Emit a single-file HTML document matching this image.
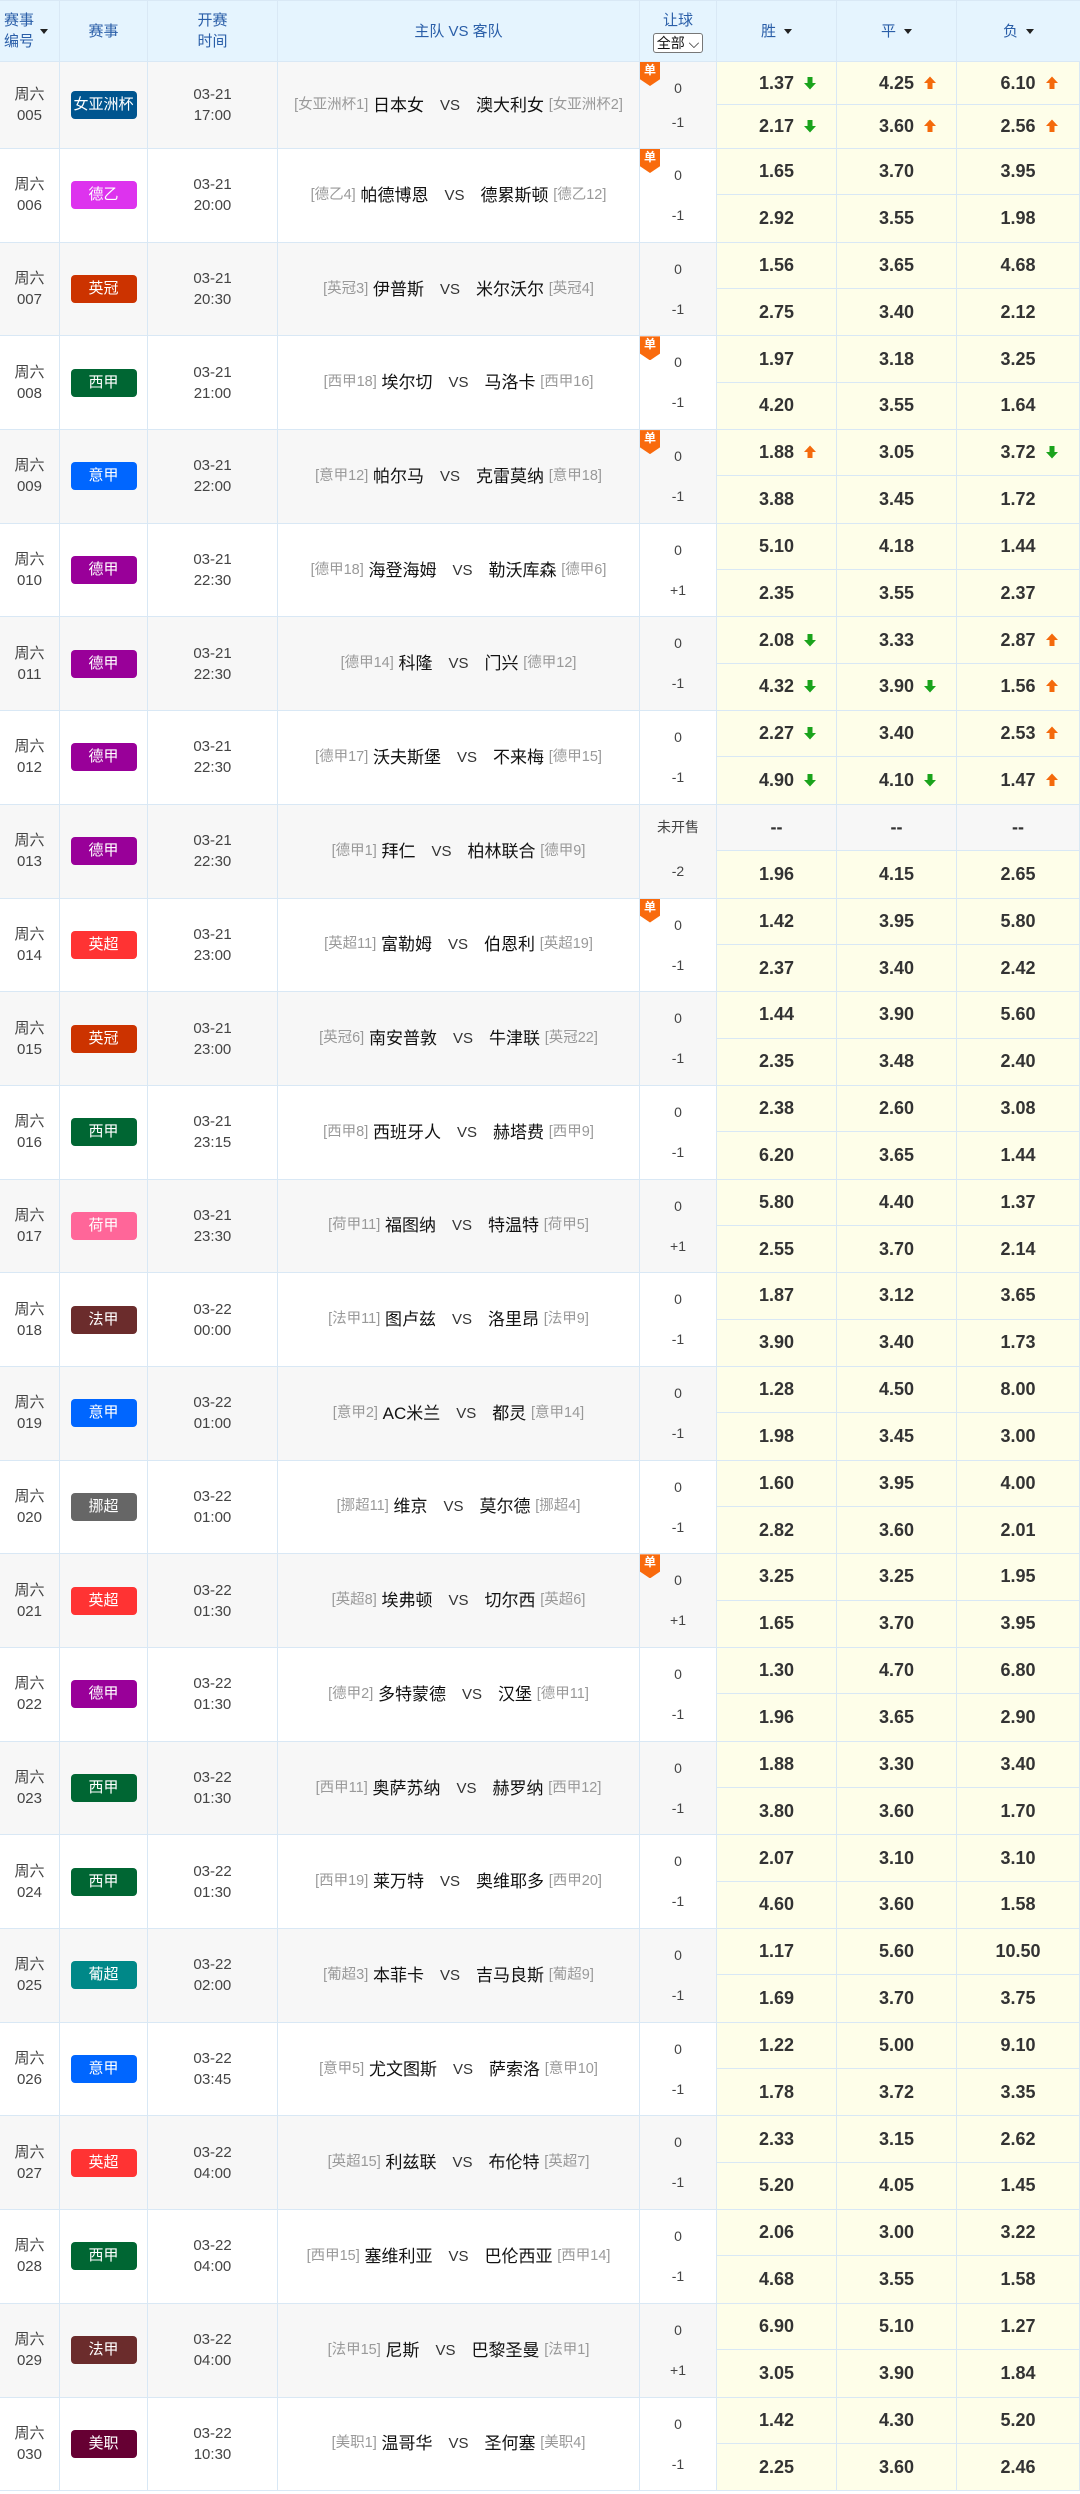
<!DOCTYPE html>
<html><head><meta charset="utf-8">
<style>
*{box-sizing:border-box;margin:0;padding:0}
body{width:1080px;height:2494px;background:#fff;font-family:"Liberation Sans","Noto Sans CJK SC",sans-serif;color:#333;overflow:hidden}
.hd,.m{display:grid;grid-template-columns:60px 88px 130px 362px 77px 120px 120px 123px;border-bottom:1px solid #d9e8f5}
.hd{height:62px;background:#e5f4fe;color:#2a5ea8;font-size:15px;border-top:1px solid #d9e8f5}
.hd>div{border-right:1px solid #d9e8f5;display:flex;align-items:center;justify-content:center;text-align:center;line-height:21px;position:relative}
.tri{display:inline-block;width:0;height:0;border-left:4px solid transparent;border-right:4px solid transparent;border-top:5px solid #222;margin-left:8px;vertical-align:middle}
.sel{display:inline-block;border:1px solid #777;border-radius:3px;color:#111;font-size:14px;line-height:18px;padding:0 3px;margin-top:2px;background:#fff}
.m{grid-template-rows:1fr 1fr;height:93.7px}
.m.f{height:87px}
.m>div{border-right:1px solid #d9e8f5}
.c{grid-row:1/3;display:flex;align-items:center;justify-content:center;text-align:center;font-size:15px;line-height:21px;color:#444}
.g .c{background:#f7f7f7}
.b{display:inline-block;width:66px;height:28px;line-height:28px;border-radius:4px;color:#fff;font-size:15px}
.t{font-size:17px;color:#111;white-space:nowrap}
.t i{font-style:normal;font-size:14.5px;color:#999}
.t s{text-decoration:none;font-size:15px;color:#333;margin:0 16px}
.h{grid-row:1/3;position:relative;text-align:center;font-size:14px;color:#444}
.g .h{background:#f7f7f7}
.h p{position:absolute;left:0;right:0}
.h p.a{top:18px}.h p.z{top:58px}
.dan{position:absolute;left:0;top:0;width:20px;height:24px;background:#f96a0d;color:#fff;font-size:12px;line-height:17px;text-align:center;clip-path:polygon(0 0,100% 0,100% 72%,50% 100%,0 72%)}
.o{background:#fefee9;display:flex;align-items:center;justify-content:center;font-weight:bold;font-size:18px;color:#333}
.o.t1{border-bottom:1px solid #d9e8f5}
.o span{position:relative}
.o svg{position:absolute;left:100%;top:3px;margin-left:9px}
.o.ns{background:#f7f7f7}
</style></head><body>
<svg width="0" height="0" style="position:absolute"><defs>
<symbol id="dn" viewBox="0 0 14 14"><path d="M4.5 1h5v6h3.5L7 13.5 1 7h3.5z"/></symbol>
<symbol id="up" viewBox="0 0 14 14"><path d="M4.5 13h5V7h3.5L7 .5 1 7h3.5z"/></symbol>
</defs></svg>
<div class="hd">
<div style="justify-content:flex-start;padding-left:4px;text-align:left">赛事<br>编号<span class="tri" style="margin-left:6px"></span></div>
<div>赛事</div><div>开赛<br>时间</div><div>主队 VS 客队</div>
<div style="flex-direction:column">让球<span class="sel">全部 ⌵</span></div>
<div>胜<span class="tri"></span></div><div>平<span class="tri"></span></div><div style="border-right:0">负<span class="tri"></span></div>
</div>

<div class="m g f"><div class="c">周六<br>005</div><div class="c"><span class="b" style="background:#00558f">女亚洲杯</span></div><div class="c">03-21<br>17:00</div><div class="c t"><i>[女亚洲杯1]</i>&nbsp;日本女<s>VS</s>澳大利女&nbsp;<i>[女亚洲杯2]</i></div><div class="h"><b class="dan">单</b><p class="a">0</p><p class="z" style="top:52px">-1</p></div>
<div class="o t1"><span>1.37<svg width="14" height="14" fill="#1aa31c"><use href="#dn"/></svg></span></div><div class="o t1"><span>4.25<svg width="14" height="14" fill="#f46a0c"><use href="#up"/></svg></span></div><div class="o t1"><span>6.10<svg width="14" height="14" fill="#f46a0c"><use href="#up"/></svg></span></div>
<div class="o"><span>2.17<svg width="14" height="14" fill="#1aa31c"><use href="#dn"/></svg></span></div><div class="o"><span>3.60<svg width="14" height="14" fill="#f46a0c"><use href="#up"/></svg></span></div><div class="o"><span>2.56<svg width="14" height="14" fill="#f46a0c"><use href="#up"/></svg></span></div></div>

<div class="m"><div class="c">周六<br>006</div><div class="c"><span class="b" style="background:#dd33ee">德乙</span></div><div class="c">03-21<br>20:00</div><div class="c t"><i>[德乙4]</i>&nbsp;帕德博恩<s>VS</s>德累斯顿&nbsp;<i>[德乙12]</i></div><div class="h"><b class="dan">单</b><p class="a">0</p><p class="z">-1</p></div>
<div class="o t1">1.65</div><div class="o t1">3.70</div><div class="o t1">3.95</div><div class="o">2.92</div><div class="o">3.55</div><div class="o">1.98</div></div>

<div class="m g"><div class="c">周六<br>007</div><div class="c"><span class="b" style="background:#cc3300">英冠</span></div><div class="c">03-21<br>20:30</div><div class="c t"><i>[英冠3]</i>&nbsp;伊普斯<s>VS</s>米尔沃尔&nbsp;<i>[英冠4]</i></div><div class="h"><p class="a">0</p><p class="z">-1</p></div>
<div class="o t1">1.56</div><div class="o t1">3.65</div><div class="o t1">4.68</div><div class="o">2.75</div><div class="o">3.40</div><div class="o">2.12</div></div>

<div class="m"><div class="c">周六<br>008</div><div class="c"><span class="b" style="background:#006633">西甲</span></div><div class="c">03-21<br>21:00</div><div class="c t"><i>[西甲18]</i>&nbsp;埃尔切<s>VS</s>马洛卡&nbsp;<i>[西甲16]</i></div><div class="h"><b class="dan">单</b><p class="a">0</p><p class="z">-1</p></div>
<div class="o t1">1.97</div><div class="o t1">3.18</div><div class="o t1">3.25</div><div class="o">4.20</div><div class="o">3.55</div><div class="o">1.64</div></div>

<div class="m g"><div class="c">周六<br>009</div><div class="c"><span class="b" style="background:#0066ff">意甲</span></div><div class="c">03-21<br>22:00</div><div class="c t"><i>[意甲12]</i>&nbsp;帕尔马<s>VS</s>克雷莫纳&nbsp;<i>[意甲18]</i></div><div class="h"><b class="dan">单</b><p class="a">0</p><p class="z">-1</p></div>
<div class="o t1"><span>1.88<svg width="14" height="14" fill="#f46a0c"><use href="#up"/></svg></span></div><div class="o t1">3.05</div><div class="o t1"><span>3.72<svg width="14" height="14" fill="#1aa31c"><use href="#dn"/></svg></span></div><div class="o">3.88</div><div class="o">3.45</div><div class="o">1.72</div></div>

<div class="m"><div class="c">周六<br>010</div><div class="c"><span class="b" style="background:#990099">德甲</span></div><div class="c">03-21<br>22:30</div><div class="c t"><i>[德甲18]</i>&nbsp;海登海姆<s>VS</s>勒沃库森&nbsp;<i>[德甲6]</i></div><div class="h"><p class="a">0</p><p class="z">+1</p></div>
<div class="o t1">5.10</div><div class="o t1">4.18</div><div class="o t1">1.44</div><div class="o">2.35</div><div class="o">3.55</div><div class="o">2.37</div></div>

<div class="m g"><div class="c">周六<br>011</div><div class="c"><span class="b" style="background:#990099">德甲</span></div><div class="c">03-21<br>22:30</div><div class="c t"><i>[德甲14]</i>&nbsp;科隆<s>VS</s>门兴&nbsp;<i>[德甲12]</i></div><div class="h"><p class="a">0</p><p class="z">-1</p></div>
<div class="o t1"><span>2.08<svg width="14" height="14" fill="#1aa31c"><use href="#dn"/></svg></span></div><div class="o t1">3.33</div><div class="o t1"><span>2.87<svg width="14" height="14" fill="#f46a0c"><use href="#up"/></svg></span></div>
<div class="o"><span>4.32<svg width="14" height="14" fill="#1aa31c"><use href="#dn"/></svg></span></div><div class="o"><span>3.90<svg width="14" height="14" fill="#1aa31c"><use href="#dn"/></svg></span></div><div class="o"><span>1.56<svg width="14" height="14" fill="#f46a0c"><use href="#up"/></svg></span></div></div>

<div class="m"><div class="c">周六<br>012</div><div class="c"><span class="b" style="background:#990099">德甲</span></div><div class="c">03-21<br>22:30</div><div class="c t"><i>[德甲17]</i>&nbsp;沃夫斯堡<s>VS</s>不来梅&nbsp;<i>[德甲15]</i></div><div class="h"><p class="a">0</p><p class="z">-1</p></div>
<div class="o t1"><span>2.27<svg width="14" height="14" fill="#1aa31c"><use href="#dn"/></svg></span></div><div class="o t1">3.40</div><div class="o t1"><span>2.53<svg width="14" height="14" fill="#f46a0c"><use href="#up"/></svg></span></div>
<div class="o"><span>4.90<svg width="14" height="14" fill="#1aa31c"><use href="#dn"/></svg></span></div><div class="o"><span>4.10<svg width="14" height="14" fill="#1aa31c"><use href="#dn"/></svg></span></div><div class="o"><span>1.47<svg width="14" height="14" fill="#f46a0c"><use href="#up"/></svg></span></div></div>

<div class="m g"><div class="c">周六<br>013</div><div class="c"><span class="b" style="background:#990099">德甲</span></div><div class="c">03-21<br>22:30</div><div class="c t"><i>[德甲1]</i>&nbsp;拜仁<s>VS</s>柏林联合&nbsp;<i>[德甲9]</i></div><div class="h"><p class="a" style="top:12px">未开售</p><p class="z">-2</p></div>
<div class="o t1 ns">--</div><div class="o t1 ns">--</div><div class="o t1 ns">--</div><div class="o">1.96</div><div class="o">4.15</div><div class="o">2.65</div></div>

<div class="m"><div class="c">周六<br>014</div><div class="c"><span class="b" style="background:#ff3333">英超</span></div><div class="c">03-21<br>23:00</div><div class="c t"><i>[英超11]</i>&nbsp;富勒姆<s>VS</s>伯恩利&nbsp;<i>[英超19]</i></div><div class="h"><b class="dan">单</b><p class="a">0</p><p class="z">-1</p></div>
<div class="o t1">1.42</div><div class="o t1">3.95</div><div class="o t1">5.80</div><div class="o">2.37</div><div class="o">3.40</div><div class="o">2.42</div></div>

<div class="m g"><div class="c">周六<br>015</div><div class="c"><span class="b" style="background:#cc3300">英冠</span></div><div class="c">03-21<br>23:00</div><div class="c t"><i>[英冠6]</i>&nbsp;南安普敦<s>VS</s>牛津联&nbsp;<i>[英冠22]</i></div><div class="h"><p class="a">0</p><p class="z">-1</p></div>
<div class="o t1">1.44</div><div class="o t1">3.90</div><div class="o t1">5.60</div><div class="o">2.35</div><div class="o">3.48</div><div class="o">2.40</div></div>

<div class="m"><div class="c">周六<br>016</div><div class="c"><span class="b" style="background:#006633">西甲</span></div><div class="c">03-21<br>23:15</div><div class="c t"><i>[西甲8]</i>&nbsp;西班牙人<s>VS</s>赫塔费&nbsp;<i>[西甲9]</i></div><div class="h"><p class="a">0</p><p class="z">-1</p></div>
<div class="o t1">2.38</div><div class="o t1">2.60</div><div class="o t1">3.08</div><div class="o">6.20</div><div class="o">3.65</div><div class="o">1.44</div></div>

<div class="m g"><div class="c">周六<br>017</div><div class="c"><span class="b" style="background:#ff6699">荷甲</span></div><div class="c">03-21<br>23:30</div><div class="c t"><i>[荷甲11]</i>&nbsp;福图纳<s>VS</s>特温特&nbsp;<i>[荷甲5]</i></div><div class="h"><p class="a">0</p><p class="z">+1</p></div>
<div class="o t1">5.80</div><div class="o t1">4.40</div><div class="o t1">1.37</div><div class="o">2.55</div><div class="o">3.70</div><div class="o">2.14</div></div>

<div class="m"><div class="c">周六<br>018</div><div class="c"><span class="b" style="background:#6b2c2c">法甲</span></div><div class="c">03-22<br>00:00</div><div class="c t"><i>[法甲11]</i>&nbsp;图卢兹<s>VS</s>洛里昂&nbsp;<i>[法甲9]</i></div><div class="h"><p class="a">0</p><p class="z">-1</p></div>
<div class="o t1">1.87</div><div class="o t1">3.12</div><div class="o t1">3.65</div><div class="o">3.90</div><div class="o">3.40</div><div class="o">1.73</div></div>

<div class="m g"><div class="c">周六<br>019</div><div class="c"><span class="b" style="background:#0066ff">意甲</span></div><div class="c">03-22<br>01:00</div><div class="c t"><i>[意甲2]</i>&nbsp;AC米兰<s>VS</s>都灵&nbsp;<i>[意甲14]</i></div><div class="h"><p class="a">0</p><p class="z">-1</p></div>
<div class="o t1">1.28</div><div class="o t1">4.50</div><div class="o t1">8.00</div><div class="o">1.98</div><div class="o">3.45</div><div class="o">3.00</div></div>

<div class="m"><div class="c">周六<br>020</div><div class="c"><span class="b" style="background:#666666">挪超</span></div><div class="c">03-22<br>01:00</div><div class="c t"><i>[挪超11]</i>&nbsp;维京<s>VS</s>莫尔德&nbsp;<i>[挪超4]</i></div><div class="h"><p class="a">0</p><p class="z">-1</p></div>
<div class="o t1">1.60</div><div class="o t1">3.95</div><div class="o t1">4.00</div><div class="o">2.82</div><div class="o">3.60</div><div class="o">2.01</div></div>

<div class="m g"><div class="c">周六<br>021</div><div class="c"><span class="b" style="background:#ff3333">英超</span></div><div class="c">03-22<br>01:30</div><div class="c t"><i>[英超8]</i>&nbsp;埃弗顿<s>VS</s>切尔西&nbsp;<i>[英超6]</i></div><div class="h"><b class="dan">单</b><p class="a">0</p><p class="z">+1</p></div>
<div class="o t1">3.25</div><div class="o t1">3.25</div><div class="o t1">1.95</div><div class="o">1.65</div><div class="o">3.70</div><div class="o">3.95</div></div>

<div class="m"><div class="c">周六<br>022</div><div class="c"><span class="b" style="background:#990099">德甲</span></div><div class="c">03-22<br>01:30</div><div class="c t"><i>[德甲2]</i>&nbsp;多特蒙德<s>VS</s>汉堡&nbsp;<i>[德甲11]</i></div><div class="h"><p class="a">0</p><p class="z">-1</p></div>
<div class="o t1">1.30</div><div class="o t1">4.70</div><div class="o t1">6.80</div><div class="o">1.96</div><div class="o">3.65</div><div class="o">2.90</div></div>

<div class="m g"><div class="c">周六<br>023</div><div class="c"><span class="b" style="background:#006633">西甲</span></div><div class="c">03-22<br>01:30</div><div class="c t"><i>[西甲11]</i>&nbsp;奥萨苏纳<s>VS</s>赫罗纳&nbsp;<i>[西甲12]</i></div><div class="h"><p class="a">0</p><p class="z">-1</p></div>
<div class="o t1">1.88</div><div class="o t1">3.30</div><div class="o t1">3.40</div><div class="o">3.80</div><div class="o">3.60</div><div class="o">1.70</div></div>

<div class="m"><div class="c">周六<br>024</div><div class="c"><span class="b" style="background:#006633">西甲</span></div><div class="c">03-22<br>01:30</div><div class="c t"><i>[西甲19]</i>&nbsp;莱万特<s>VS</s>奥维耶多&nbsp;<i>[西甲20]</i></div><div class="h"><p class="a">0</p><p class="z">-1</p></div>
<div class="o t1">2.07</div><div class="o t1">3.10</div><div class="o t1">3.10</div><div class="o">4.60</div><div class="o">3.60</div><div class="o">1.58</div></div>

<div class="m g"><div class="c">周六<br>025</div><div class="c"><span class="b" style="background:#008888">葡超</span></div><div class="c">03-22<br>02:00</div><div class="c t"><i>[葡超3]</i>&nbsp;本菲卡<s>VS</s>吉马良斯&nbsp;<i>[葡超9]</i></div><div class="h"><p class="a">0</p><p class="z">-1</p></div>
<div class="o t1">1.17</div><div class="o t1">5.60</div><div class="o t1">10.50</div><div class="o">1.69</div><div class="o">3.70</div><div class="o">3.75</div></div>

<div class="m"><div class="c">周六<br>026</div><div class="c"><span class="b" style="background:#0066ff">意甲</span></div><div class="c">03-22<br>03:45</div><div class="c t"><i>[意甲5]</i>&nbsp;尤文图斯<s>VS</s>萨索洛&nbsp;<i>[意甲10]</i></div><div class="h"><p class="a">0</p><p class="z">-1</p></div>
<div class="o t1">1.22</div><div class="o t1">5.00</div><div class="o t1">9.10</div><div class="o">1.78</div><div class="o">3.72</div><div class="o">3.35</div></div>

<div class="m g"><div class="c">周六<br>027</div><div class="c"><span class="b" style="background:#ff3333">英超</span></div><div class="c">03-22<br>04:00</div><div class="c t"><i>[英超15]</i>&nbsp;利兹联<s>VS</s>布伦特&nbsp;<i>[英超7]</i></div><div class="h"><p class="a">0</p><p class="z">-1</p></div>
<div class="o t1">2.33</div><div class="o t1">3.15</div><div class="o t1">2.62</div><div class="o">5.20</div><div class="o">4.05</div><div class="o">1.45</div></div>

<div class="m"><div class="c">周六<br>028</div><div class="c"><span class="b" style="background:#006633">西甲</span></div><div class="c">03-22<br>04:00</div><div class="c t"><i>[西甲15]</i>&nbsp;塞维利亚<s>VS</s>巴伦西亚&nbsp;<i>[西甲14]</i></div><div class="h"><p class="a">0</p><p class="z">-1</p></div>
<div class="o t1">2.06</div><div class="o t1">3.00</div><div class="o t1">3.22</div><div class="o">4.68</div><div class="o">3.55</div><div class="o">1.58</div></div>

<div class="m g"><div class="c">周六<br>029</div><div class="c"><span class="b" style="background:#6b2c2c">法甲</span></div><div class="c">03-22<br>04:00</div><div class="c t"><i>[法甲15]</i>&nbsp;尼斯<s>VS</s>巴黎圣曼&nbsp;<i>[法甲1]</i></div><div class="h"><p class="a">0</p><p class="z">+1</p></div>
<div class="o t1">6.90</div><div class="o t1">5.10</div><div class="o t1">1.27</div><div class="o">3.05</div><div class="o">3.90</div><div class="o">1.84</div></div>

<div class="m"><div class="c">周六<br>030</div><div class="c"><span class="b" style="background:#660033">美职</span></div><div class="c">03-22<br>10:30</div><div class="c t"><i>[美职1]</i>&nbsp;温哥华<s>VS</s>圣何塞&nbsp;<i>[美职4]</i></div><div class="h"><p class="a">0</p><p class="z">-1</p></div>
<div class="o t1">1.42</div><div class="o t1">4.30</div><div class="o t1">5.20</div><div class="o">2.25</div><div class="o">3.60</div><div class="o">2.46</div></div>
</body></html>
